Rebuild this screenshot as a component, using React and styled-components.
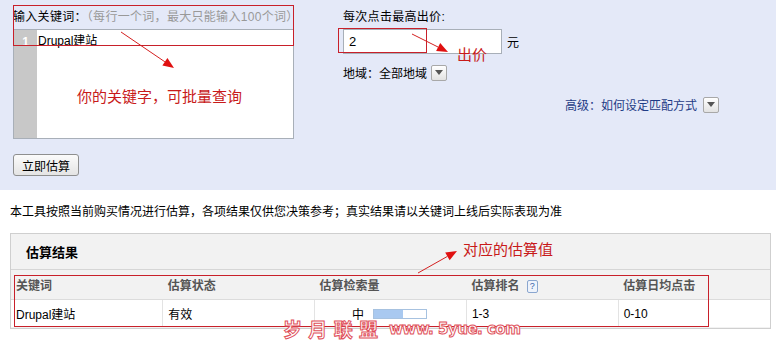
import styled, { createGlobalStyle } from "styled-components"

const GlobalStyle = createGlobalStyle`
  body {
    margin: 0;
    background: #fff;
    font-family: "Liberation Sans", "Noto Sans CJK SC", sans-serif;
    font-size: 12px;
    color: #000;
  }
`

const results = [
  { keyword: "Drupal建站", status: "有效", level: "中", fill: 55, rank: "1-3", clicks: "0-10" },
]

const DropButton = () => (
  <StDrop>
    <svg width="8" height="5" viewBox="0 0 8 5">
      <path d="M0 0 H8 L4 5 Z" fill="#555" />
    </svg>
  </StDrop>
)

const Arrow = ({ x1, y1, x2, y2 }) => {
  const angle = Math.atan2(y2 - y1, x2 - x1)
  const len = 11
  const w = 4.5
  const bx = x2 - len * Math.cos(angle)
  const by = y2 - len * Math.sin(angle)
  const px = w * Math.sin(angle)
  const py = -w * Math.cos(angle)
  return (
    <g>
      <line x1={x1} y1={y1} x2={bx} y2={by} stroke="#d42020" strokeWidth="1" />
      <polygon points={`${x2},${y2} ${bx + px},${by + py} ${bx - px},${by - py}`} fill="#e01010" />
    </g>
  )
}

const App = () => {
  return (
    <StPage>
      <GlobalStyle />

      <StSearchPanel>
        <StLeftCol>
          <StLabel>
            输入关键词：<StHint>（每行一个词，最大只能输入100个词）</StHint>
          </StLabel>
          <StEditor>
            <StGutter>1</StGutter>
            <StLines>Drupal建站</StLines>
          </StEditor>
          <StButton>立即估算</StButton>
        </StLeftCol>

        <StRightCol>
          <StLabel>每次点击最高出价:</StLabel>
          <StPriceRow>
            <StPriceInput>2</StPriceInput>
            <span>元</span>
          </StPriceRow>
          <StRegionRow>
            地域：全部地域
            <DropButton />
          </StRegionRow>
          <StAdvancedRow>
            <StAdvancedLink>高级：如何设定匹配方式</StAdvancedLink>
            <DropButton />
          </StAdvancedRow>
        </StRightCol>
      </StSearchPanel>

      <StNotice>本工具按照当前购买情况进行估算，各项结果仅供您决策参考；真实结果请以关键词上线后实际表现为准</StNotice>

      <StResultBox>
        <StResultTitle>估算结果</StResultTitle>
        <StTable>
          <thead>
            <tr>
              <StTh>关键词</StTh>
              <StTh>估算状态</StTh>
              <StTh>估算检索量</StTh>
              <StTh>
                估算排名 <StHelp>?</StHelp>
              </StTh>
              <StTh>估算日均点击</StTh>
            </tr>
          </thead>
          <tbody>
            {results.map((row) => (
              <tr key={row.keyword}>
                <StTd>{row.keyword}</StTd>
                <StTd>{row.status}</StTd>
                <StTd>
                  <StLevel>
                    {row.level}
                    <StBar>
                      <StBarFill style={{ width: `${row.fill}%` }} />
                    </StBar>
                  </StLevel>
                </StTd>
                <StTd>{row.rank}</StTd>
                <StTd>{row.clicks}</StTd>
              </tr>
            ))}
          </tbody>
        </StTable>
      </StResultBox>

      {/* 标注层 */}
      <StMark $x={13} $y={5} $w={281} $h={41} />
      <StMark $x={338} $y={28} $w={89} $h={25} />
      <StMark $x={14} $y={275} $w={695} $h={52} />
      <StNote $x={77} $y={87}>你的关键字，可批量查询</StNote>
      <StNote $x={457} $y={45}>出价</StNote>
      <StNote $x={463} $y={240}>对应的估算值</StNote>
      <StArrows width="776" height="340">
        <Arrow x1={121} y1={32} x2={174} y2={68} />
        <Arrow x1={412} y1={34} x2={448} y2={52} />
        <Arrow x1={418} y1={273} x2={457} y2={251} />
      </StArrows>
      <StWatermark>
        <StWmCn>岁 月 联 盟</StWmCn>
        <StWmEn>www. 5yue. com</StWmEn>
      </StWatermark>
    </StPage>
  )
}

//-----styled-components-----

const StPage = styled.div`
  position: relative;
  width: 776px;
  height: 340px;
  overflow: hidden;
`

// 搜索面板
const StSearchPanel = styled.div`
  height: 190px;
  box-sizing: border-box;
  background: #e4e9f8;
  padding: 9px 57px 0 13px;
  display: flex;
  gap: 49px;
`

const StLeftCol = styled.div`
  width: 281px;
  display: flex;
  flex-direction: column;
  align-items: flex-start;
`

const StRightCol = styled.div`
  flex: 1;
  display: flex;
  flex-direction: column;
`

const StLabel = styled.div`
  height: 16px;
  line-height: 16px;
  white-space: nowrap;
  letter-spacing: 0.3px;
`

const StHint = styled.span`
  color: #999;
`

const StEditor = styled.div`
  margin-top: 4px;
  width: 281px;
  height: 110px;
  box-sizing: border-box;
  border: 1px solid #a8afb8;
  background: #fff;
  display: flex;
`

const StGutter = styled.div`
  width: 23px;
  background: #c8c8c8;
  color: #fff;
  font-weight: bold;
  text-align: center;
  padding-top: 4px;
  line-height: 16px;
`

const StLines = styled.div`
  padding: 3px 0 0 1px;
  line-height: 16px;
`

const StButton = styled.button`
  margin-top: 15px;
  height: 22px;
  padding: 0 8px;
  font-family: inherit;
  font-size: 12px;
  color: #000;
  border: 1px solid #8e8f8f;
  border-radius: 3px;
  background: linear-gradient(#fbfbfb, #e4e4e4);
`

const StPriceRow = styled.div`
  margin-top: 4px;
  display: flex;
  align-items: center;
  gap: 5px;
`

const StPriceInput = styled.div`
  width: 159px;
  height: 25px;
  box-sizing: border-box;
  border: 1px solid #a8afb8;
  background: #fff;
  padding-left: 5px;
  line-height: 23px;
  font-size: 13px;
`

const StRegionRow = styled.div`
  margin-top: 10px;
  display: flex;
  align-items: center;
  gap: 4px;
  height: 17px;
`

const StAdvancedRow = styled.div`
  margin-top: 15px;
  display: flex;
  justify-content: flex-end;
  align-items: center;
  gap: 6px;
  height: 17px;
`

const StAdvancedLink = styled.span`
  color: #1f3c86;
`

// 下拉按钮
const StDrop = styled.span`
  width: 16px;
  height: 16px;
  box-sizing: border-box;
  border: 1px solid #a8a8a8;
  border-radius: 2px;
  background: linear-gradient(#ffffff, #e2e2e2);
  display: inline-flex;
  align-items: center;
  justify-content: center;
`

const StNotice = styled.div`
  padding: 15px 0 0 10px;
  height: 28px;
  line-height: 14px;
  box-sizing: border-box;
`

// 估算结果
const StResultBox = styled.div`
  margin: 15px 5px 0 10px;
  border: 1px solid #cfcfcf;
  background: #f2f2f2;
  padding: 0 0 1px 0;
`

const StResultTitle = styled.div`
  height: 35px;
  line-height: 37px;
  padding-left: 15px;
  font-weight: bold;
  font-size: 13px;
  border-bottom: 1px solid #d6d6d6;
`

const StTable = styled.table`
  width: 100%;
  border-collapse: collapse;
  table-layout: fixed;
`

const StTh = styled.th`
  height: 29px;
  text-align: left;
  padding: 0 0 0 5px;
  font-weight: bold;
  color: #555;
  border-bottom: 1px solid #dcdcdc;
`

const StTd = styled.td`
  height: 27px;
  padding: 0 0 0 5px;
  background: #fff;
  text-align: left;
  & + & {
    border-left: 1px solid #e3e3e3;
  }
`

const StHelp = styled.span`
  display: inline-block;
  width: 9px;
  height: 11px;
  line-height: 11px;
  margin-left: 4px;
  border: 1px solid #8aa6cf;
  border-radius: 2px;
  background: #eef3fb;
  color: #3a64a8;
  font-size: 9px;
  font-weight: normal;
  text-align: center;
  vertical-align: 1px;
`

const StLevel = styled.span`
  display: inline-flex;
  align-items: center;
  gap: 9px;
  padding-left: 32px;
`

const StBar = styled.span`
  width: 52px;
  height: 8px;
  border: 1px solid #a7c2e0;
  background: #fff;
  display: inline-block;
`

const StBarFill = styled.span`
  display: block;
  height: 100%;
  background: #a9c9f0;
`

// 标注
const StMark = styled.div`
  position: absolute;
  left: ${({ $x }) => $x}px;
  top: ${({ $y }) => $y}px;
  width: ${({ $w }) => $w}px;
  height: ${({ $h }) => $h}px;
  box-sizing: border-box;
  border: 1px solid #c8202a;
  pointer-events: none;
`

const StNote = styled.div`
  position: absolute;
  left: ${({ $x }) => $x}px;
  top: ${({ $y }) => $y}px;
  color: #c81a1a;
  font-size: 15px;
  line-height: 20px;
  white-space: nowrap;
`

const StArrows = styled.svg`
  position: absolute;
  left: 0;
  top: 0;
  pointer-events: none;
`

const StWatermark = styled.div`
  position: absolute;
  left: 283px;
  top: 319px;
  display: flex;
  align-items: center;
  gap: 10px;
  line-height: 20px;
  white-space: nowrap;
`

const StWmCn = styled.span`
  font-family: "Noto Sans CJK SC", sans-serif;
  font-weight: bold;
  font-size: 19px;
  letter-spacing: 1px;
  color: #fff;
  -webkit-text-stroke: 1px #e0505a;
`

const StWmEn = styled.span`
  font-family: "DejaVu Sans", sans-serif;
  font-weight: bold;
  font-size: 15px;
  letter-spacing: -0.5px;
  color: #fff;
  -webkit-text-stroke: 1px #e0505a;
`

export default App
